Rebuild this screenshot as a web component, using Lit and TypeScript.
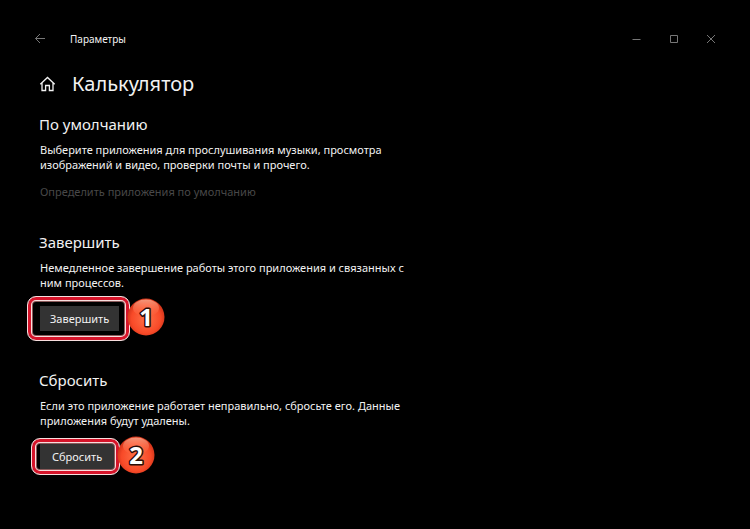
import { LitElement, html, css, svg } from "lit";
import { customElement, property } from "lit/decorators.js";

@customElement("step-marker")
class StepMarker extends LitElement {
  @property() step = "1";

  static styles = css`
    :host { display: block; width: 38px; height: 38px; }
    .ball { display: block; width: 100%; height: 100%; }
    .digit {
      font: bold 24px "Noto Sans", "Open Sans", sans-serif;
      fill: #fff;
      stroke: #2a0d08;
      stroke-width: 3px;
      stroke-linejoin: round;
      paint-order: stroke;
      text-anchor: middle;
    }
  `;

  render() {
    return html`<svg class="ball" viewBox="0 0 38 38" role="img" aria-label=${`Шаг ${this.step}`}>
      ${svg`
      <defs>
        <radialGradient id="body" cx="50%" cy="55%" r="52%">
          <stop offset="0" stop-color="#ff7048"></stop>
          <stop offset=".75" stop-color="#f84a28"></stop>
          <stop offset="1" stop-color="#d4351a"></stop>
        </radialGradient>
        <linearGradient id="gloss" x1="0" y1="0" x2="0" y2="1">
          <stop offset="0" stop-color="#ffb89c" stop-opacity=".75"></stop>
          <stop offset="1" stop-color="#ff7048" stop-opacity=".1"></stop>
        </linearGradient>
      </defs>
      <circle cx="19" cy="19" r="18.5" fill="url(#body)"></circle>
      <ellipse cx="19" cy="10" rx="13" ry="8.5" fill="url(#gloss)"></ellipse>
      <text class="digit" x="19" y="28">${this.step}</text>`}
    </svg>`;
  }
}

@customElement("app-root")
class AppRoot extends LitElement {
  static styles = css`
    :host {
      display: block;
      min-height: 100vh;
      background: #000;
      color: #f2f2f2;
      font: 11px/15px "Noto Sans", "Open Sans", sans-serif;
    }
    button { border: 0; padding: 0; background: none; color: inherit; font: inherit; }
    svg { display: block; }
    .titlebar {
      display: flex;
      align-items: center;
      padding: 28px 27px 0 28px;
      height: 22px;
    }
    .icon-btn {
      display: grid;
      place-items: center;
      width: 24px;
      height: 22px;
      color: #777;
    }
    .caption { margin-left: 18px; font-size: 10px; flex: 1; }
    .window-controls { display: flex; gap: 13px; }
    .page-title {
      display: flex;
      align-items: center;
      gap: 16px;
      padding: 19px 39px 0;
    }
    h1 { margin: 0; font-size: 20px; line-height: 30px; font-weight: 400; }
    main { padding: 15px 39px 40px; }
    section { max-width: 372px; }
    h2 { margin: 0 0 8px; font-size: 15px; line-height: 20px; font-weight: 400; }
    p { margin: 0 1px; }
    .disabled-link { display: block; margin: 12px 1px 33px; color: #484848; text-decoration: none; }
    .action { position: relative; width: max-content; margin: 16px 1px 39px; }
    .push { display: block; height: 25px; padding: 0 10px; background: #333; }
    .ring {
      position: absolute;
      box-sizing: border-box;
      inset: -10px -11px -10px -13px;
      border: 1px solid #f8dede;
      border-radius: 9px;
      box-shadow:
        inset 0 0 0 3px #d6142a,
        inset 0 0 0 4px #f8dede,
        inset 0 0 0 5px #8a5a5a;
      pointer-events: none;
    }
    .marker { position: absolute; left: 100%; top: 50%; margin: -21px 0 0 8px; }
    .tight .push { padding: 0 12px; }
    .tight .ring { inset: -6px -6px -6px -9px; }
    .tight .marker { margin-left: 3px; }
  `;

  private action(label: string, step: string) {
    return html`<div class="action ${step === "2" ? "tight" : ""}">
      <button class="push">${label}</button>
      <span class="ring"></span>
      <step-marker class="marker" step=${step}></step-marker>
    </div>`;
  }

  render() {
    return html`
      <header class="titlebar">
        <button class="icon-btn" aria-label="Назад">
          <svg width="12" height="12" viewBox="0 0 12 12" fill="none" stroke="currentColor"><path d="M11 5.5H1.5M6 1L1.5 5.5L6 10"></path></svg>
        </button>
        <span class="caption">Параметры</span>
        <div class="window-controls">
          <button class="icon-btn" aria-label="Свернуть">
            <svg width="10" height="10" viewBox="0 0 10 10" stroke="currentColor"><path d="M0.5 5.5H8.5"></path></svg>
          </button>
          <button class="icon-btn" aria-label="Развернуть">
            <svg width="10" height="10" viewBox="0 0 10 10" fill="none" stroke="currentColor"><path d="M1.5 1.5H8.5V8.5H1.5Z"></path></svg>
          </button>
          <button class="icon-btn" aria-label="Закрыть">
            <svg width="10" height="10" viewBox="0 0 10 10" stroke="currentColor"><path d="M1 1L9 9M9 1L1 9"></path></svg>
          </button>
        </div>
      </header>
      <div class="page-title">
        <svg width="17" height="16" viewBox="0 0 17 16" fill="none" stroke="#f2f2f2" stroke-width="1.3"><path d="M1.3 8.3L8.5 1.5L15.7 8.3M3 7V14.5H6.6V9.5H10.4V14.5H14V7"></path></svg>
        <h1>Калькулятор</h1>
      </div>
      <main>
        <section>
          <h2>По умолчанию</h2>
          <p>Выберите приложения для прослушивания музыки, просмотра изображений и видео, проверки почты и прочего.</p>
          <a class="disabled-link" href="#defaults" aria-disabled="true">Определить приложения по умолчанию</a>
        </section>
        <section>
          <h2>Завершить</h2>
          <p>Немедленное завершение работы этого приложения и связанных с ним процессов.</p>
          ${this.action("Завершить", "1")}
        </section>
        <section>
          <h2>Сбросить</h2>
          <p>Если это приложение работает неправильно, сбросьте его. Данные приложения будут удалены.</p>
          ${this.action("Сбросить", "2")}
        </section>
      </main>
    `;
  }
}
